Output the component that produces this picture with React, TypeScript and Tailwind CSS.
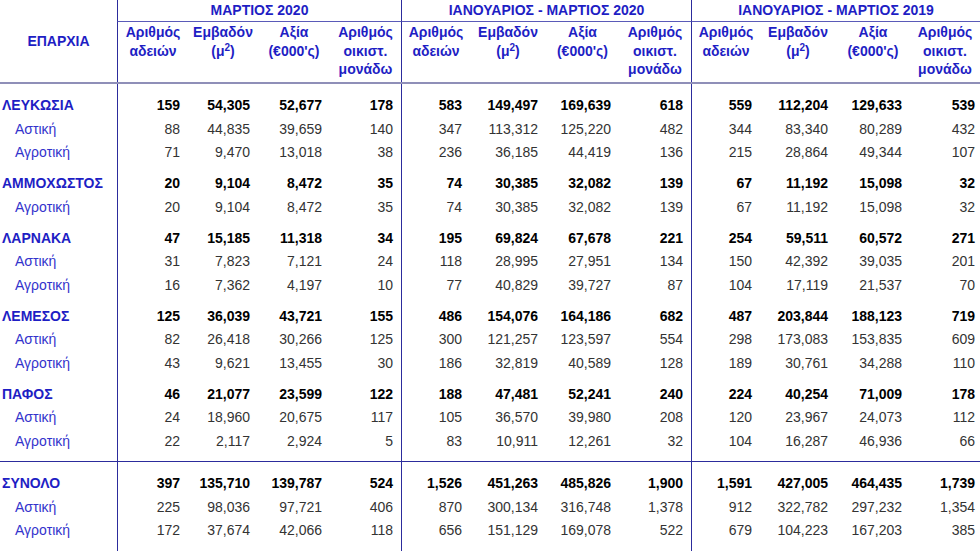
import React from "react";

type RowDef = { label: string; vals: string[]; region: boolean; pt: string };

const rows: RowDef[] = [
  { label: "ΛΕΥΚΩΣΙΑ", region: true, pt: "pt-[10px]", vals: ["159", "54,305", "52,677", "178", "583", "149,497", "169,639", "618", "559", "112,204", "129,633", "539"] },
  { label: "Αστική", region: false, pt: "", vals: ["88", "44,835", "39,659", "140", "347", "113,312", "125,220", "482", "344", "83,340", "80,289", "432"] },
  { label: "Αγροτική", region: false, pt: "", vals: ["71", "9,470", "13,018", "38", "236", "36,185", "44,419", "136", "215", "28,864", "49,344", "107"] },
  { label: "ΑΜΜΟΧΩΣΤΟΣ", region: true, pt: "pt-[7.5px]", vals: ["20", "9,104", "8,472", "35", "74", "30,385", "32,082", "139", "67", "11,192", "15,098", "32"] },
  { label: "Αγροτική", region: false, pt: "", vals: ["20", "9,104", "8,472", "35", "74", "30,385", "32,082", "139", "67", "11,192", "15,098", "32"] },
  { label: "ΛΑΡΝΑΚΑ", region: true, pt: "pt-[7.5px]", vals: ["47", "15,185", "11,318", "34", "195", "69,824", "67,678", "221", "254", "59,511", "60,572", "271"] },
  { label: "Αστική", region: false, pt: "", vals: ["31", "7,823", "7,121", "24", "118", "28,995", "27,951", "134", "150", "42,392", "39,035", "201"] },
  { label: "Αγροτική", region: false, pt: "", vals: ["16", "7,362", "4,197", "10", "77", "40,829", "39,727", "87", "104", "17,119", "21,537", "70"] },
  { label: "ΛΕΜΕΣΟΣ", region: true, pt: "pt-[7.5px]", vals: ["125", "36,039", "43,721", "155", "486", "154,076", "164,186", "682", "487", "203,844", "188,123", "719"] },
  { label: "Αστική", region: false, pt: "", vals: ["82", "26,418", "30,266", "125", "300", "121,257", "123,597", "554", "298", "173,083", "153,835", "609"] },
  { label: "Αγροτική", region: false, pt: "", vals: ["43", "9,621", "13,455", "30", "186", "32,819", "40,589", "128", "189", "30,761", "34,288", "110"] },
  { label: "ΠΑΦΟΣ", region: true, pt: "pt-[7.5px]", vals: ["46", "21,077", "23,599", "122", "188", "47,481", "52,241", "240", "224", "40,254", "71,009", "178"] },
  { label: "Αστική", region: false, pt: "", vals: ["24", "18,960", "20,675", "117", "105", "36,570", "39,980", "208", "120", "23,967", "24,073", "112"] },
  { label: "Αγροτική", region: false, pt: "", vals: ["22", "2,117", "2,924", "5", "83", "10,911", "12,261", "32", "104", "16,287", "46,936", "66"] },
];

const totals: RowDef[] = [
  { label: "ΣΥΝΟΛΟ", region: true, pt: "pt-[10px]", vals: ["397", "135,710", "139,787", "524", "1,526", "451,263", "485,826", "1,900", "1,591", "427,005", "464,435", "1,739"] },
  { label: "Αστική", region: false, pt: "", vals: ["225", "98,036", "97,721", "406", "870", "300,134", "316,748", "1,378", "912", "322,782", "297,232", "1,354"] },
  { label: "Αγροτική", region: false, pt: "", vals: ["172", "37,674", "42,066", "118", "656", "151,129", "169,078", "522", "679", "104,223", "167,203", "385"] },
];

const VLINE = "border-l border-[#2c2c9c]";

function Row({ r }: { r: RowDef }) {
  return (
    <>
      <div
        className={`${r.pt} leading-[23.5px] whitespace-nowrap ${
          r.region ? "font-bold text-[#1e1ec4] pl-[2px]" : "text-[#3333cc] pl-[15px]"
        }`}
      >
        {r.label}
      </div>
      {r.vals.map((v, i) => (
        <div
          key={i}
          className={`${r.pt} leading-[23.5px] text-right whitespace-nowrap ${i % 4 === 0 ? VLINE : ""} ${
            i === 11 ? "pr-[5px]" : "pr-2"
          } ${r.region ? "font-bold text-black" : "text-[#333333]"}`}
        >
          {v}
        </div>
      ))}
    </>
  );
}

function Spacer({ h, border }: { h: string; border: boolean }) {
  return (
    <>
      {Array.from({ length: 13 }).map((_, i) => (
        <div
          key={i}
          className={`${h} ${border ? "border-b border-b-[#2c2c9c]" : ""} ${
            i === 1 || i === 5 || i === 9 ? VLINE : ""
          }`}
        />
      ))}
    </>
  );
}

const periods = ["ΜΑΡΤΙΟΣ 2020", "ΙΑΝΟΥΑΡΙΟΣ - ΜΑΡΤΙΟΣ 2020", "ΙΑΝΟΥΑΡΙΟΣ - ΜΑΡΤΙΟΣ 2019"];

function HeaderCells() {
  const cls = "pt-[1px] leading-[18.5px] text-center font-bold text-[#1e1ec4] whitespace-nowrap overflow-hidden";
  return (
    <>
      <div className={`${cls} ${VLINE}`}>
        Αριθμός
        <br />
        αδειών
      </div>
      <div className={cls}>
        Εμβαδόν
        <br />
        (μ<sup className="text-[10px]">2</sup>)
      </div>
      <div className={cls}>
        Αξία
        <br />
        (€000'ς)
      </div>
      <div className={cls}>
        Αριθμός
        <br />
        οικιστ.
        <br />
        μονάδω
      </div>
    </>
  );
}

export default function App() {
  return (
    <div
      className="w-[980px] h-[551px] overflow-hidden bg-white text-[14px]"
      style={{ fontFamily: '"Liberation Sans", Arial, sans-serif' }}
    >
      <div className="grid grid-cols-[117px_71px_70px_72px_71px_69px_76px_73px_72px_69px_76px_74px_70px]">
        <div className="row-span-2 flex items-center justify-center border-b-2 border-b-[#8f8fb8] font-bold text-[#1e1ec4]">
          ΕΠΑΡΧΙΑ
        </div>
        {periods.map((p) => (
          <div
            key={p}
            className={`col-span-4 h-[22px] leading-[21px] text-center font-bold text-[#1e1ec4] whitespace-nowrap border-b border-b-[#5a5ab8] ${VLINE}`}
          >
            {p}
          </div>
        ))}
        {periods.map((p) => (
          <div
            key={p + "h"}
            className="col-span-4 grid grid-cols-subgrid h-[62px] border-b-2 border-b-[#8f8fb8]"
          >
            <HeaderCells />
          </div>
        ))}
        {rows.map((r, i) => (
          <Row key={i} r={r} />
        ))}
        <Spacer h="h-[9px]" border={true} />
        {totals.map((r, i) => (
          <Row key={"t" + i} r={r} />
        ))}
        <Spacer h="h-[20px]" border={false} />
      </div>
    </div>
  );
}
